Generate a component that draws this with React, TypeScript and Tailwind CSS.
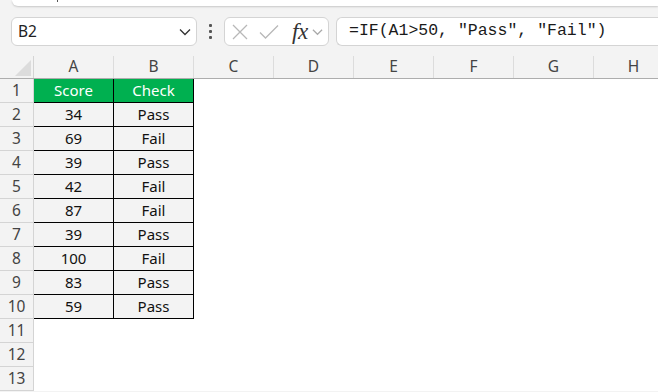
import React from "react";

const cols = ["A", "B", "C", "D", "E", "F", "G", "H"];
const data: [string, string][] = [
  ["34", "Pass"],
  ["69", "Fail"],
  ["39", "Pass"],
  ["42", "Fail"],
  ["87", "Fail"],
  ["39", "Pass"],
  ["100", "Fail"],
  ["83", "Pass"],
  ["59", "Pass"],
];

function Chevron({ className }: { className?: string }) {
  return (
    <svg width="12" height="8" viewBox="0 0 12 8" className={className}>
      <path d="M1 1.5 L6 6.5 L11 1.5" fill="none" stroke="currentColor" strokeWidth="1.3" />
    </svg>
  );
}

export default function App() {
  const rows = 13;
  return (
    <div
      className="w-[658px] h-[392px] bg-[#f3f3f3] overflow-hidden"
      style={{ fontFamily: "'Noto Sans', 'Open Sans', sans-serif" }}
    >
      {/* ribbon bottom edge */}
      <div className="ml-[12px] h-[6px] bg-white rounded-bl-[8px] shadow-[0_1px_2px_rgba(0,0,0,0.18)] relative">
        <div className="absolute left-[45px] top-0 w-[1px] h-[2px] bg-[#555]" />
      </div>

      {/* formula bar row */}
      <div className="flex items-center h-[29px] mt-[11px] pl-[11px]">
        <div className="w-[186px] shrink-0 h-[29px] bg-white border border-[#d4d4d4] rounded-[6px] flex items-center justify-between pl-[6px] pr-[5px]">
          <span className="text-[15.5px] text-[#222] leading-none">B2</span>
          <Chevron className="text-[#333]" />
        </div>
        <div className="w-[27px] shrink-0 flex flex-col items-center gap-[3px]">
          <div className="w-[3px] h-[3px] bg-[#555] rounded-[1px]" />
          <div className="w-[3px] h-[3px] bg-[#555] rounded-[1px]" />
          <div className="w-[3px] h-[3px] bg-[#555] rounded-[1px]" />
        </div>
        <div className="w-[105px] shrink-0 h-[29px] bg-white border border-[#d4d4d4] rounded-[6px] flex items-center pl-[7px]">
          <svg width="16" height="16" viewBox="0 0 16 16">
            <path d="M1 1 L15 15 M15 1 L1 15" stroke="#b8b8b8" strokeWidth="1.3" fill="none" />
          </svg>
          <svg width="20" height="16" viewBox="0 0 20 16" className="ml-[11px]">
            <path d="M1 8.5 L6.5 14 L19 1.5" stroke="#b8b8b8" strokeWidth="1.3" fill="none" />
          </svg>
          <span
            className="ml-[13px] text-[23px] italic text-[#333] leading-none tracking-[-0.5px]"
            style={{ fontFamily: "'Liberation Serif', 'DejaVu Serif', serif" }}
          >
            fx
          </span>
          <Chevron className="ml-[4px] text-[#aaa] w-[11px]" />
        </div>
        <div className="ml-[7px] flex-1 h-[29px] bg-white border border-[#d4d4d4] border-r-0 rounded-l-[6px] flex items-center pl-[12px]">
          <span
            className="text-[16.5px] text-[#1a1a1a] leading-none whitespace-pre"
            style={{ fontFamily: "'Liberation Mono', 'DejaVu Sans Mono', monospace" }}
          >
            =IF(A1&gt;50, "Pass", "Fail")
          </span>
        </div>
      </div>

      {/* grid */}
      <div className="mt-[10px]">
        {/* column headers */}
        <div className="flex h-[23px] border-b border-[#adadad]">
          <div className="w-[34px] shrink-0 h-full border-r border-[#d4d4d4] relative">
            <svg width="18" height="18" viewBox="0 0 18 18" className="absolute left-[14px] top-[3px]">
              <path d="M17 1 L17 17 L1 17 Z" fill="#dcdcdc" />
            </svg>
          </div>
          {cols.map((c) => (
            <div
              key={c}
              className="w-[80px] shrink-0 h-full border-r border-[#dcdcdc] flex items-center justify-center text-[15.5px] text-[#444]"
            >
              {c}
            </div>
          ))}
        </div>
        {/* rows */}
        {Array.from({ length: rows }).map((_, i) => {
          const r = i + 1;
          const inTable = r <= 10;
          let a = "";
          let b = "";
          if (r === 1) {
            a = "Score";
            b = "Check";
          } else if (r <= 10) {
            a = data[r - 2][0];
            b = data[r - 2][1];
          }
          const head = r === 1;
          const cellCls = `w-[80px] shrink-0 h-full flex items-center justify-center text-[15px] ${
            head ? "bg-[#00b050] text-white" : "text-[#111]"
          }`;
          return (
            <div key={r} className="flex h-[24px]">
              <div className="w-[34px] shrink-0 h-full bg-[#f3f3f3] border-r border-b border-[#d4d4d4] flex items-center justify-center text-[15.5px] text-[#444]">
                {r}
              </div>
              {inTable ? (
                <>
                  <div className={`${cellCls} border-r border-b border-black`}>{a}</div>
                  <div className={`${cellCls} border-r border-b border-black`}>{b}</div>
                </>
              ) : (
                <div className="w-[160px] shrink-0 h-full bg-white" />
              )}
              <div className="flex-1 h-full bg-white" />
            </div>
          );
        })}
      </div>
    </div>
  );
}
